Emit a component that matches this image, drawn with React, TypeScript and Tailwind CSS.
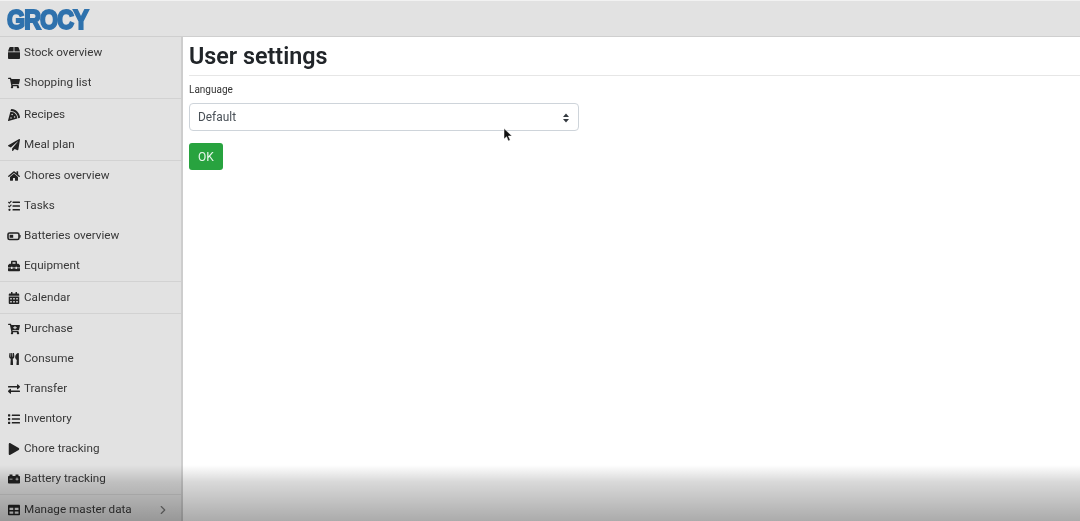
import type { IconType } from "react-icons";
import {
  FaBox,
  FaShoppingCart,
  FaPizzaSlice,
  FaPaperPlane,
  FaHome,
  FaTasks,
  FaToolbox,
  FaCalendarAlt,
  FaCartPlus,
  FaUtensils,
  FaExchangeAlt,
  FaList,
  FaPlay,
  FaCarBattery,
  FaTable,
} from "react-icons/fa";
import { ChevronRight } from "lucide-react";

interface NavItem {
  label: string;
  icon: IconType;
  more?: boolean;
}

const BatteryIcon: IconType = () => (
  <svg width="14" height="12" viewBox="0 0 14 12">
    <rect x="1" y="3" width="11" height="6.5" rx="1.6" fill="none" stroke="currentColor" strokeWidth="1.6" />
    <rect x="2.6" y="4.8" width="3.6" height="3" fill="currentColor" />
    <rect x="12.4" y="5" width="1.2" height="2.6" fill="currentColor" />
  </svg>
);

const groups: { className: string; items: NavItem[] }[] = [
  {
    className: "",
    items: [
      { label: "Stock overview", icon: FaBox },
      { label: "Shopping list", icon: FaShoppingCart },
    ],
  },
  {
    className: "border-t pt-px",
    items: [
      { label: "Recipes", icon: FaPizzaSlice },
      { label: "Meal plan", icon: FaPaperPlane },
    ],
  },
  {
    className: "border-t",
    items: [
      { label: "Chores overview", icon: FaHome },
      { label: "Tasks", icon: FaTasks },
      { label: "Batteries overview", icon: BatteryIcon },
      { label: "Equipment", icon: FaToolbox },
    ],
  },
  {
    className: "border-t pt-px",
    items: [{ label: "Calendar", icon: FaCalendarAlt }],
  },
  {
    className: "border-t",
    items: [
      { label: "Purchase", icon: FaCartPlus },
      { label: "Consume", icon: FaUtensils },
      { label: "Transfer", icon: FaExchangeAlt },
      { label: "Inventory", icon: FaList },
      { label: "Chore tracking", icon: FaPlay },
      { label: "Battery tracking", icon: FaCarBattery },
    ],
  },
  {
    className: "border-t",
    items: [{ label: "Manage master data", icon: FaTable, more: true }],
  },
];

const NavRow = ({ item }: { item: NavItem }) => {
  const Icon = item.icon;
  return (
    <div className="flex h-[30px] items-center pr-[11px] pl-[7px] text-[11.7px] text-[#383838]">
      <span className="mr-[3px] mb-px flex w-[14px] shrink-0 justify-center text-[#222]">
        <Icon size={12} />
      </span>
      <span className="truncate">{item.label}</span>
      {item.more && <ChevronRight size={14} className="ml-auto text-[#777]" />}
    </div>
  );
};

export default function App() {
  return (
    <div className="relative flex h-[521px] w-[1080px] flex-col overflow-hidden bg-white font-['Roboto',sans-serif] blur-[0.4px]">
      <header className="flex h-[37px] shrink-0 items-center border-t border-b border-t-[#f2f2f2] border-b-[#cfcfcf] bg-[#e2e2e2] pt-[4px] pl-[7px]">
        <span className="origin-left scale-x-[0.86] font-['Liberation_Sans',sans-serif] text-[27px] leading-none font-bold tracking-[-1px] text-[#2f72ad] [-webkit-text-stroke:2px_#2f72ad]">
          GROCY
        </span>
      </header>
      <div className="flex min-h-0 flex-1">
        <nav className="w-[183px] shrink-0 border-r-2 border-[#cdcdcd] bg-[#e2e2e2] pt-px">
          {groups.map((group, i) => (
            <div key={i} className={`${group.className} border-[#d2d2d2]`}>
              {group.items.map((item) => (
                <NavRow key={item.label} item={item} />
              ))}
            </div>
          ))}
        </nav>
        <main className="flex-1 pl-[6px] text-[#212529]">
          <h1 className="h-[39px] border-b border-[#e6e6e6] pt-[4px] text-[23.3px] leading-[30px] font-semibold">
            User settings
          </h1>
          <label className="mt-[7px] block text-[10px] leading-[14px] text-[#333]">Language</label>
          <div className="mt-[6px] flex h-[28px] w-[390px] items-center justify-between rounded-[4px] border border-[#ced4da] pt-px pr-[8px] pl-[8px] text-[11.9px] text-[#495057]">
            Default
            <svg width="8" height="10" viewBox="0 0 8 10" className="fill-[#343a40]">
              <path d="M4 0.5 7 4H1zM4 9.5 1 6h6z" />
            </svg>
          </div>
          <button className="mt-[12px] block h-[27px] w-[34px] rounded-[3px] bg-[#28a33f] text-[12px] text-[#e8f7ec]">
            OK
          </button>
        </main>
      </div>
      {/* mouse pointer */}
      <svg width="10" height="15" viewBox="0 0 10 15" className="absolute top-[128px] left-[503px]">
        <path d="M1 0.5v10.5l2.6-2.3 1.7 4.2 1.9-.8-1.8-4.1H9z" fill="#111" stroke="#fff" strokeWidth="0.5" />
      </svg>
      {/* video controls fade */}
      <div className="pointer-events-none absolute inset-x-0 bottom-0 h-[56px] bg-gradient-to-b from-black/0 via-black/15 via-30% to-black/33" />
    </div>
  );
}
